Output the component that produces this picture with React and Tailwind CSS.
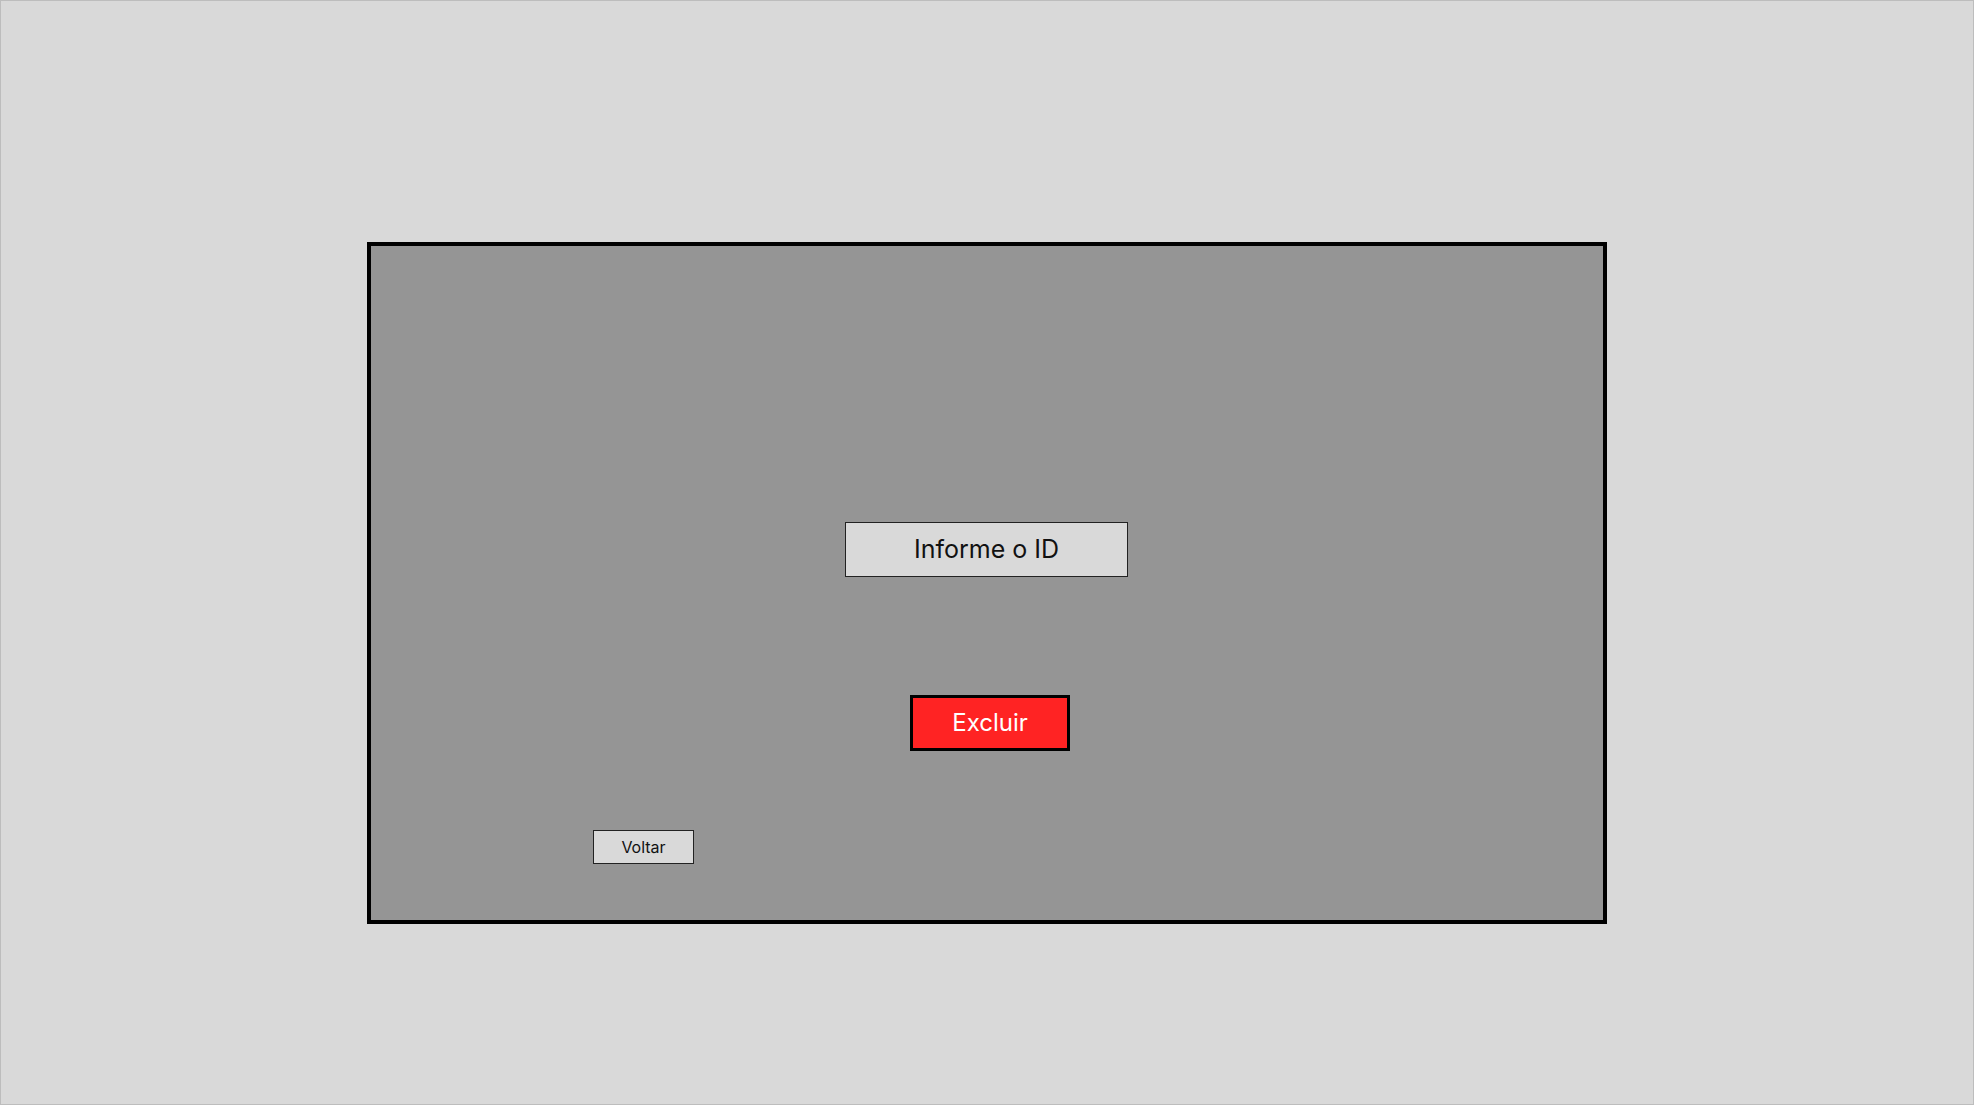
export default function App() {
  return (
    <div
      className="w-[1974px] h-[1105px] border border-[#bdbdbd] bg-[#d9d9d9] pt-[241px] pl-[366px] box-border"
      style={{ fontFamily: "Inter, 'Noto Sans', sans-serif" }}
    >
      <div className="w-[1240px] h-[682px] border-4 border-black bg-[#959595] box-border flex flex-col items-start pt-[276px]">
        <div className="ml-[474px] w-[283px] h-[55px] border border-[#222] bg-[#d9d9d9] flex items-center justify-center text-[25px] text-[#111] box-border">
          Informe o ID
        </div>
        <button className="ml-[539px] mt-[118px] w-[160px] h-[56px] border-[3px] border-black bg-[#ff2323] flex items-center justify-center text-[24px] text-white box-border">
          Excluir
        </button>
        <button className="ml-[222px] mt-[79px] w-[101px] h-[34px] border border-[#222] bg-[#d9d9d9] flex items-center justify-center text-[16px] text-[#111] box-border">
          Voltar
        </button>
      </div>
    </div>
  );
}
